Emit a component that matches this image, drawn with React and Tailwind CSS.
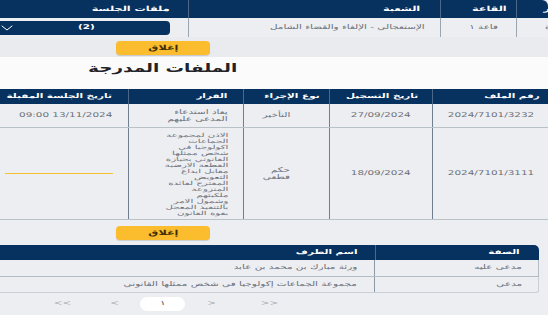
import React from "react";

const S = ({ children, o = "origin-right", className = "" }) => (
  <span className={`inline-block whitespace-nowrap scale-x-[1.6] ${o} ${className}`}>{children}</span>
);

const Chevron = () => (
  <svg width="12" height="6" viewBox="0 0 12 6" fill="none">
    <path d="M1 1 L6 5 L11 1" stroke="#ffffff" strokeWidth="1" strokeLinecap="round" />
  </svg>
);

const CloseBtn = () => (
  <div className="w-[94px] h-[14px] rounded-[4px] bg-[#fbbd2e] shadow-[0_1px_1px_rgba(0,0,0,0.15)] flex items-center justify-center">
    <S o="origin-center" className="text-[7px] font-bold text-[#3b2c05] leading-none">إغلاق</S>
  </div>
);

const decisionLines = [
  "الاذن لمجموعة",
  "الجماعات",
  "اكولوجيا في",
  "شخص ممثلها",
  "القانوني بحيازة",
  "القطعة الارضية",
  "مقابل ايداع",
  "التعويض",
  "المقترح لفائدة",
  "المنزوعة",
  "ملكيتهم",
  "وشمول الامر",
  "بالتنفيذ المعجل",
  "بقوة القانون",
];

export default function App() {
  return (
    <div
      className="w-[560px] h-[315px] overflow-hidden bg-white flex"
      style={{ fontFamily: '"DejaVu Sans", "Noto Sans", sans-serif' }}
    >
      <div className="w-[548px] h-[315px] bg-[#eceef1] flex flex-col">
        {/* top table */}
        <div dir="rtl" className="grid grid-cols-[32px_76px_252px_188px] h-[18px] bg-[#07325f] rounded-tr-[6px] text-white text-[7px] font-bold">
          <div className="overflow-hidden flex items-center border-l border-[#4d6788]">
            <S className="-mr-[2px]">ر</S>
          </div>
          <div className="flex items-center pr-[9px] border-l border-[#4d6788]">
            <S>القاعة</S>
          </div>
          <div className="flex items-center pr-[20px] border-l border-[#4d6788]">
            <S>الشعبة</S>
          </div>
          <div className="flex items-center pr-[18px]">
            <S>ملفات الجلسة</S>
          </div>
        </div>
        <div dir="rtl" className="grid grid-cols-[32px_76px_252px_188px] h-[19px] bg-[#edeef1] text-[6.5px] text-[#6b7079]">
          <div className="overflow-hidden flex items-center border-l border-[#9aa5b0]">
            <S className="-mr-[2px]">ة</S>
          </div>
          <div className="flex items-center pr-[18px] border-l border-[#9aa5b0]">
            <S>قاعة ١</S>
          </div>
          <div className="flex items-center pr-[15px] border-l border-[#9aa5b0]">
            <S>الإستعجالي - الإلغاء والقضاء الشامل</S>
          </div>
          <div className="flex items-center justify-end pr-[18px]">
            <div dir="ltr" className="w-[170px] h-[14px] rounded-r-[4px] bg-[#07325f] flex items-center">
              <div className="w-[14px] flex justify-center"><Chevron /></div>
              <div className="ml-[64px] text-white text-[6.5px] font-bold">
                <S o="origin-left">(2)</S>
              </div>
            </div>
          </div>
        </div>

        {/* close button band */}
        <div className="h-[20px] bg-[#e9ebee] pt-[4px] pl-[116px]">
          <CloseBtn />
        </div>

        {/* title */}
        <div className="h-[32px] bg-[#fbfbfc] pt-[1px]">
          <div className="w-[326px] flex justify-center">
            <S o="origin-center" className="text-[11.5px] font-bold text-[#1f2328] leading-[20px]">
              <span dir="rtl">الملفات المدرجة</span>
            </S>
          </div>
        </div>

        {/* second table */}
        <div dir="rtl" className="grid grid-cols-[116px_103px_86px_115px_128px] h-[15px] bg-[#07325f] text-white text-[6.5px] font-bold">
          <div className="flex items-center pr-[8px] border-l border-[#4d6788]"><S>رقم الملف</S></div>
          <div className="flex items-center pr-[14px] border-l border-[#4d6788]"><S>تاريخ التسجيل</S></div>
          <div className="flex items-center pr-[9px] border-l border-[#4d6788]"><S>نوع الإجراء</S></div>
          <div className="flex items-center pr-[16px] border-l border-[#4d6788]"><S>القرار</S></div>
          <div className="flex items-center pr-[16px]"><S>تاريخ الجلسة المقبلة</S></div>
        </div>
        <div dir="rtl" className="grid grid-cols-[116px_103px_86px_115px_128px] h-[24px] bg-[#edeef1] text-[6.5px] text-[#6b7079] border-b border-[#b9c1c9]">
          <div className="flex items-center justify-center border-l border-[#6f7f8f]"><S o="origin-center"><span dir="ltr">2024/7101/3232</span></S></div>
          <div className="flex items-center justify-center border-l border-[#6f7f8f]"><S o="origin-center"><span dir="ltr">27/09/2024</span></S></div>
          <div className="flex items-center pr-[39px] border-l border-[#6f7f8f]"><S>التأخير</S></div>
          <div className="flex items-center pr-[15px] border-l border-[#6f7f8f]">
            <S className="leading-[7px] text-right">يعاد استدعاء<br />المدعى عليهم</S>
          </div>
          <div className="flex items-center pr-[16px]"><S><span dir="ltr">09:00 13/11/2024</span></S></div>
        </div>
        <div dir="rtl" className="grid grid-cols-[116px_103px_86px_115px_128px] h-[92px] bg-[#edeef1] text-[6.5px] text-[#6b7079] border-b border-[#b9c1c9]">
          <div className="flex items-center justify-center border-l border-[#6f7f8f]"><S o="origin-center"><span dir="ltr">2024/7101/3111</span></S></div>
          <div className="flex items-center justify-center border-l border-[#6f7f8f]"><S o="origin-center"><span dir="ltr">18/09/2024</span></S></div>
          <div className="flex items-center pr-[39px] border-l border-[#6f7f8f]">
            <S className="leading-[7px] text-right">حكم<br />قطعي</S>
          </div>
          <div className="flex items-start pt-[4px] pr-[15px] border-l border-[#6f7f8f]">
            <span className="inline-block whitespace-nowrap scale-x-[1.85] origin-right text-[5.5px] leading-[6px] text-right">
              {decisionLines.map((l, i) => (
                <React.Fragment key={i}>
                  {l}
                  {i < decisionLines.length - 1 && <br />}
                </React.Fragment>
              ))}
            </span>
          </div>
          <div className="flex items-center pr-[15px] pl-[5px]">
            <div className="w-full h-[1.5px] bg-[#f7c232]" />
          </div>
        </div>

        {/* close band 2 */}
        <div className="h-[25px] pt-[6px] pl-[116px]">
          <CloseBtn />
        </div>

        {/* parties table */}
        <div className="w-[539px]">
          <div dir="rtl" className="grid grid-cols-[164px_375px] h-[15px] bg-[#07325f] rounded-tr-[5px] text-white text-[6.5px] font-bold">
            <div className="flex items-center pr-[19px] border-l border-[#4d6788]"><S>الصفة</S></div>
            <div className="flex items-center pr-[17px]"><S>اسم الطرف</S></div>
          </div>
          <div dir="rtl" className="grid grid-cols-[164px_375px] h-[17px] bg-[#edeef1] text-[6.5px] text-[#6b7079] border-b border-r border-[#b3bbc4]">
            <div className="flex items-center pr-[16px] border-l border-[#8c99a6]"><S>مدعى عليه</S></div>
            <div className="flex items-center pr-[17px]"><S>ورثة مبارك بن محمد بن عابد</S></div>
          </div>
          <div dir="rtl" className="grid grid-cols-[164px_375px] h-[16px] bg-[#edeef1] text-[6.5px] text-[#6b7079] border-b border-r border-[#c9cfd6] rounded-br-[3px]">
            <div className="flex items-center pr-[16px] border-l border-[#8c99a6]"><S>مدعي</S></div>
            <div className="flex items-center pr-[17px]"><S>مجموعة الجماعات إكولوجيا في شخص ممثلها القانوني</S></div>
          </div>
        </div>

        {/* pagination */}
        <div className="flex items-center h-[14px] mt-[4px] text-[6.5px] text-[#9ea3aa]">
          <div className="w-[20px] ml-[52px] flex justify-center"><S o="origin-center">&lt;&lt;</S></div>
          <div className="w-[20px] ml-[33px] flex justify-center"><S o="origin-center">&lt;</S></div>
          <div className="w-[45px] h-[14px] ml-[15px] rounded-full bg-white flex items-center justify-center text-[#4b5058]">
            <S o="origin-center">١</S>
          </div>
          <div className="w-[20px] ml-[17px] flex justify-center"><S o="origin-center">&gt;</S></div>
          <div className="w-[20px] ml-[37px] flex justify-center"><S o="origin-center">&gt;&gt;</S></div>
        </div>
      </div>
      <div className="w-[12px] h-[315px] bg-white" />
    </div>
  );
}
